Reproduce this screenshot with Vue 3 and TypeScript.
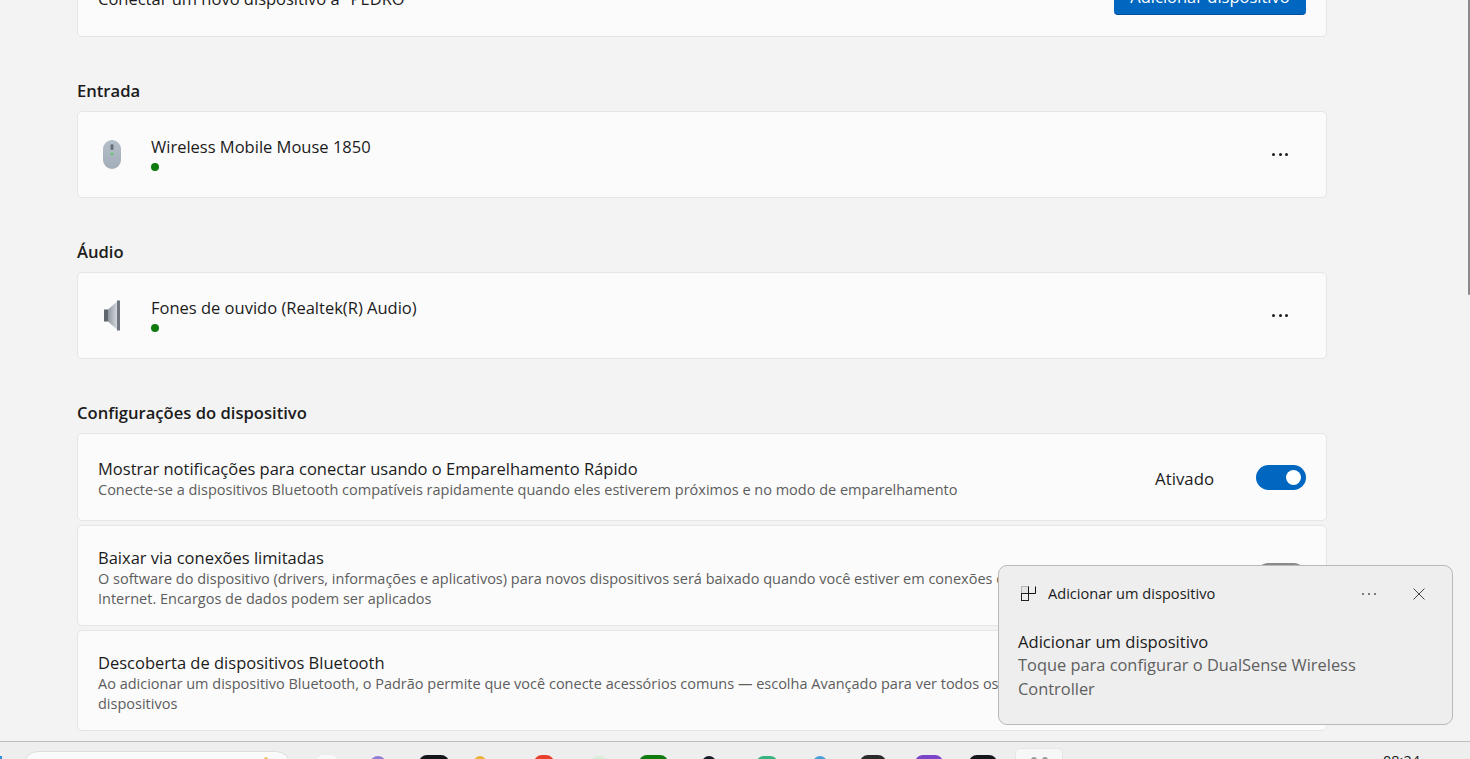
<template>
  <div class="window">
    <main class="page">
      <div class="scroller">
        <section class="card top-card">
          <span class="title">Conectar um novo dispositivo a "PEDRO"</span>
          <button class="primary">Adicionar dispositivo</button>
        </section>

        <h2>Entrada</h2>
        <section class="card device">
          <svg class="dev-icon" viewBox="0 0 24 34" width="24" height="34">
            <defs>
              <linearGradient id="mouseBody" x1="0" y1="0" x2="0" y2="1">
                <stop offset="0" stop-color="#b4bec9" />
                <stop offset="1" stop-color="#a4aeb9" />
              </linearGradient>
            </defs>
            <rect x="3" y="2" width="18" height="29" rx="9" fill="url(#mouseBody)" />
            <rect x="10.5" y="6" width="3" height="6" rx="1.5" fill="#6b7178" />
            <circle cx="12" cy="16" r="1.3" fill="#58d05c" />
          </svg>
          <div class="dev-text">
            <span class="title">Wireless Mobile Mouse 1850</span>
            <span class="dot"></span>
          </div>
          <span class="more">
            <i></i><i></i><i></i>
          </span>
        </section>

        <h2>Áudio</h2>
        <section class="card device">
          <svg class="dev-icon" viewBox="0 0 24 34" width="24" height="34">
            <defs>
              <linearGradient id="cone" x1="0" y1="0" x2="1" y2="0">
                <stop offset="0" stop-color="#8f979f" />
                <stop offset="1" stop-color="#d3d8dd" />
              </linearGradient>
            </defs>
            <rect x="4" y="10.5" width="4" height="12" fill="#5f666d" />
            <path d="M8 10.5 L17 2.5 V30.5 L8 22.5 Z" fill="url(#cone)" />
            <rect x="17" y="1.5" width="3" height="30" fill="#6f767d" />
          </svg>
          <div class="dev-text">
            <span class="title">Fones de ouvido (Realtek(R) Audio)</span>
            <span class="dot"></span>
          </div>
          <span class="more">
            <i></i><i></i><i></i>
          </span>
        </section>

        <h2>Configurações do dispositivo</h2>
        <div class="settings">
          <section class="card setting first">
            <div class="setting-text">
              <span class="title">Mostrar notificações para conectar usando o Emparelhamento Rápido</span>
              <span class="sub">Conecte-se a dispositivos Bluetooth compatíveis rapidamente quando eles estiverem próximos e no modo de emparelhamento</span>
            </div>
            <span class="state">Ativado</span>
            <span class="toggle"><b></b></span>
          </section>
          <section class="card setting tall">
            <div class="setting-text">
              <span class="title">Baixar via conexões limitadas</span>
              <span class="sub">O software do dispositivo (drivers, informações e aplicativos) para novos dispositivos será baixado quando você estiver em conexões de<br />Internet. Encargos de dados podem ser aplicados</span>
            </div>
            <span class="toggle off"></span>
          </section>
          <section class="card setting tall">
            <div class="setting-text">
              <span class="title">Descoberta de dispositivos Bluetooth</span>
              <span class="sub">Ao adicionar um dispositivo Bluetooth, o Padrão permite que você conecte acessórios comuns — escolha Avançado para ver todos os<br />dispositivos</span>
            </div>
          </section>
        </div>
      </div>
      <div class="scrollbar"></div>
    </main>

    <footer class="taskbar">
      <span class="start"></span>
      <div class="search"><span class="search-art"></span></div>
      <div class="apps">
        <span
          v-for="app in apps"
          :key="app.x"
          class="app"
          :style="{ left: app.x + 'px', width: app.w + 'px', background: app.color, top: app.top + 'px' }"
        ></span>
        <span class="active-app"><i></i><i></i></span>
      </div>
      <span class="clock">08:24</span>
    </footer>

    <aside class="toast">
      <div class="toast-head">
        <svg class="toast-icon" viewBox="0 0 16 16" width="16" height="16">
          <rect x="0.5" y="0.5" width="7" height="7" fill="#e4e4e4" stroke="#b5b5b5" />
          <rect x="0.5" y="7.5" width="7" height="7" fill="none" stroke="#222" />
          <path d="M7.5 0.5V7.5H14.5V0.5" fill="none" stroke="#111" />
        </svg>
        <span class="toast-app">Adicionar um dispositivo</span>
        <span class="toast-more">
          <i></i><i></i><i></i>
        </span>
        <svg class="toast-close" viewBox="0 0 12 12" width="12" height="12">
          <path d="M0.5 0.5L11.5 11.5M11.5 0.5L0.5 11.5" stroke="#444" stroke-width="1" fill="none" />
        </svg>
      </div>
      <div class="toast-title">Adicionar um dispositivo</div>
      <div class="toast-body">Toque para configurar o DualSense Wireless Controller</div>
    </aside>
  </div>
</template>

<script setup lang="ts">
interface TaskApp {
  x: number;
  w: number;
  color: string;
  top: number;
}

// only the top few pixels of each icon show above the window edge
const apps: TaskApp[] = [
  { x: 316, w: 22, color: '#f9f9f9', top: 13 },
  { x: 370, w: 16, color: '#8f7fd6', top: 14 },
  { x: 419, w: 30, color: '#14161c', top: 13 },
  { x: 474, w: 12, color: '#eeb23c', top: 14 },
  { x: 534, w: 20, color: '#e8402c', top: 13 },
  { x: 590, w: 18, color: '#d8ecd8', top: 14 },
  { x: 639, w: 29, color: '#107c10', top: 13 },
  { x: 702, w: 14, color: '#1a1c28', top: 14 },
  { x: 756, w: 22, color: '#36b37e', top: 14 },
  { x: 813, w: 14, color: '#4a9fd8', top: 14 },
  { x: 860, w: 26, color: '#2b2b2b', top: 13 },
  { x: 915, w: 28, color: '#7a45c8', top: 13 },
  { x: 969, w: 28, color: '#14161c', top: 13 }
];
</script>

<style>
html,
body {
  margin: 0;
  overflow: hidden;
}
</style>

<style scoped>
.window {
  position: relative;
  width: 1470px;
  height: 759px;
  display: flex;
  flex-direction: column;
  overflow: hidden;
  background: #f3f3f3;
  font-family: 'Open Sans', 'Noto Sans', 'Liberation Sans', sans-serif;
  color: #1b1b1b;
}

.page {
  position: relative;
  flex: 1;
  min-height: 0;
  overflow: hidden;
}

/* page is scrolled down: the first card is cut by the top edge */
.scroller {
  width: 1250px;
  margin: -51px 0 0 77px;
}

.card {
  box-sizing: border-box;
  background: #fbfbfb;
  border: 1px solid #e5e5e5;
  border-radius: 5px;
  display: flex;
  align-items: center;
}

.top-card {
  height: 88px;
  padding: 0 20px;
  justify-content: space-between;
}

.top-card .title {
  margin-top: 10px;
}

.primary {
  width: 192px;
  height: 36px;
  margin-top: 8px;
  border: none;
  border-bottom: 1px solid #004f9a;
  border-radius: 4px;
  background: #0067c0;
  color: #fff;
  font: inherit;
  font-size: 16.5px;
}

h2 {
  margin: 0;
  height: 20px;
  padding: 44px 0 10px;
  font-size: 16.6px;
  line-height: 20px;
  font-weight: 600;
}

.title {
  font-size: 16.5px;
  line-height: 21px;
}

.device {
  height: 87px;
  padding: 0 38px 0 22px;
}

.dev-icon {
  flex: none;
  margin-right: 27px;
}

.dev-text {
  flex: 1;
  display: flex;
  flex-direction: column;
  gap: 6px;
  margin-top: -3px;
}

.dot {
  width: 8px;
  height: 8px;
  border-radius: 50%;
  background: #0f7b0f;
}

.more {
  display: flex;
  gap: 3.5px;
}

.more i {
  width: 3px;
  height: 3px;
  border-radius: 50%;
  background: #1b1b1b;
}

.settings {
  display: flex;
  flex-direction: column;
  gap: 4px;
}

.setting {
  padding: 0 20px;
}

.setting.first {
  height: 88px;
}

.setting.tall {
  height: 101px;
}

.setting-text {
  flex: 1;
  min-width: 0;
  padding-top: 4px;
  display: flex;
  flex-direction: column;
  white-space: nowrap;
}

.sub {
  margin-top: 1px;
  font-size: 14.5px;
  line-height: 20px;
  color: #5d5d5d;
}

.state {
  font-size: 16.8px;
  margin-top: 2px;
  margin-right: 42px;
}

.toggle {
  flex: none;
  box-sizing: border-box;
  width: 50px;
  height: 25px;
  padding-right: 5px;
  border-radius: 13px;
  background: #0067c0;
  display: flex;
  align-items: center;
  justify-content: flex-end;
}

.toggle b {
  width: 15px;
  height: 15px;
  border-radius: 50%;
  background: #fff;
}

.toggle.off {
  background: #8a8a8a;
}

.scrollbar {
  position: absolute;
  top: 0;
  right: 0;
  width: 2px;
  height: 295px;
  border-radius: 0 0 1px 1px;
  background: #8a8a8a;
}

.taskbar {
  position: relative;
  flex: none;
  height: 18px;
  box-sizing: border-box;
  border-top: 1px solid #bfbfbf;
  background: #eeeeee;
  overflow: hidden;
}

.start {
  position: absolute;
  left: 0;
  top: 14px;
  width: 2px;
  height: 4px;
  background: #2f8fd8;
}

.search {
  position: absolute;
  left: 23px;
  top: 9px;
  width: 268px;
  height: 30px;
  box-sizing: border-box;
  border: 1px solid #dedede;
  border-radius: 16px;
  background: #fbfbfb;
}

.search-art {
  position: absolute;
  left: 240px;
  top: 5px;
  width: 4px;
  height: 6px;
  border-radius: 2px 2px 0 0;
  background: #f2c46d;
}

.apps {
  position: absolute;
  inset: 0;
}

.app {
  position: absolute;
  height: 20px;
  border-radius: 8px 8px 0 0;
}

.active-app {
  position: absolute;
  left: 1015px;
  top: 6px;
  width: 48px;
  height: 30px;
  box-sizing: border-box;
  padding-top: 8px;
  border: 1px solid #e6e6e6;
  border-radius: 5px;
  background: #f7f7f7;
  display: flex;
  justify-content: center;
  gap: 5px;
}

.active-app i {
  width: 6px;
  height: 6px;
  border-radius: 50%;
  background: #9a9a9a;
}

.clock {
  position: absolute;
  left: 1383px;
  top: 11px;
  font-size: 14.5px;
  line-height: 16px;
}

.toast {
  position: absolute;
  left: 998px;
  top: 565px;
  width: 455px;
  height: 160px;
  box-sizing: border-box;
  padding: 0 19px;
  background: #eeeeee;
  border: 1px solid #b9b9b9;
  border-radius: 9px;
}

.toast-head {
  display: flex;
  align-items: center;
  height: 56px;
  font-size: 14.6px;
}

.toast-icon {
  margin-left: 3px;
  margin-right: 11px;
}

.toast-app {
  margin-top: -2px;
}

.toast-more {
  display: flex;
  gap: 4px;
  margin-left: auto;
  margin-right: 37px;
}

.toast-more i {
  width: 2px;
  height: 2px;
  border-radius: 50%;
  background: #555;
}

.toast-close {
  margin-right: 8px;
}

.toast-title {
  margin-top: 9px;
  font-size: 16.6px;
  line-height: 22px;
}

.toast-body {
  width: 380px;
  font-size: 16.4px;
  line-height: 24px;
  color: #5f5f5f;
}
</style>
